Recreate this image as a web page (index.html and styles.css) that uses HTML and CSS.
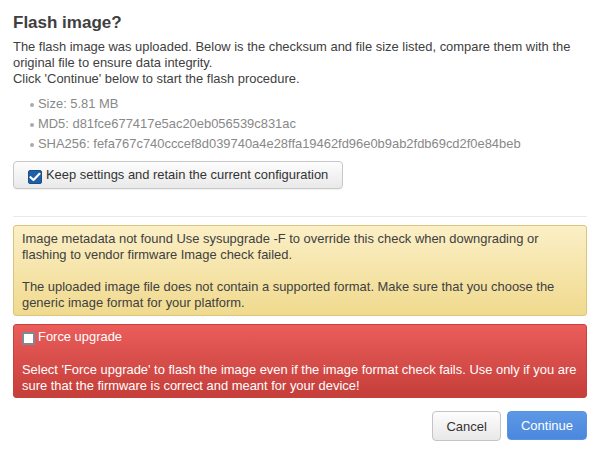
FILE: index.html
```html
<!DOCTYPE html>
<html>
<head>
<meta charset="utf-8">
<link rel="stylesheet" href="styles.css">
</head>
<body>
<div class="dialog">
  <h4 class="title">Flash image?</h4>
  <p class="intro">The flash image was uploaded. Below is the checksum and file size listed, compare them with the original file to ensure data integrity.<br>Click 'Continue' below to start the flash procedure.</p>
  <ul class="facts">
    <li>Size: 5.81 MB</li>
    <li>MD5: d81fce677417e5ac20eb056539c831ac</li>
    <li>SHA256: fefa767c740cccef8d039740a4e28ffa19462fd96e0b9ab2fdb69cd2f0e84beb</li>
  </ul>
  <label class="keep">
    <span class="cb cb-on"><svg width="12" height="10" viewBox="0 0 12 10"><path d="M1.5 5.2 L4.5 8 L10.5 1.8" fill="none" stroke="#fff" stroke-width="2.2" stroke-linecap="round" stroke-linejoin="round"/></svg></span>
    <span>Keep settings and retain the current configuration</span>
  </label>
  <hr class="sep">
  <div class="alert warn">
    <p>Image metadata not found Use sysupgrade -F to override this check when downgrading or flashing to vendor firmware Image check failed.</p>
    <p>The uploaded image file does not contain a supported format. Make sure that you choose the generic image format for your platform.</p>
  </div>
  <div class="alert danger">
    <label class="force"><span class="cb cb-off"></span><span>Force upgrade</span></label>
    <p>Select 'Force upgrade' to flash the image even if the image format check fails. Use only if you are sure that the firmware is correct and meant for your device!</p>
  </div>
  <div class="actions">
    <button class="btn">Cancel</button>
    <button class="btn primary">Continue</button>
  </div>
</div>
</body>
</html>
```
FILE: styles.css
```css
html, body {
  margin: 0;
  padding: 0;
  background: #fff;
}
body {
  font-family: "Liberation Sans", Arial, sans-serif;
  font-size: 12.93px;
  line-height: 16px;
  color: #404040;
}
.dialog {
  padding: 12px 13px 13px 13px;
}
.title {
  margin: 0;
  font-size: 17px;
  line-height: 22px;
  font-weight: bold;
  color: #404040;
  padding-top: 0;
}
.intro {
  margin: 5px 0 0 0;
}
.facts {
  margin: 7px 0 0 0;
  padding: 0 0 0 25px;
  color: #888;
  list-style: none;
}
.facts li {
  line-height: 20px;
  position: relative;
}
.facts li::before {
  content: "";
  position: absolute;
  left: -8px;
  top: 9px;
  width: 4px;
  height: 4px;
  border-radius: 50%;
  background: #aaa;
}
.keep {
  display: inline-flex;
  align-items: center;
  gap: 4px;
  margin-top: 7px;
  height: 26px;
  padding: 0 14px 0 14px;
  border: 1px solid #c8c8c8;
  border-radius: 4px;
  background: linear-gradient(#fdfdfd, #e9e9e9);
  box-shadow: 0 1px 1px rgba(0,0,0,0.06);
  color: #333;
}
.cb {
  display: inline-flex;
  align-items: center;
  justify-content: center;
  width: 14px;
  height: 14px;
  border-radius: 2px;
  box-sizing: border-box;
}
.cb-on {
  background: #1f5fa6;
  border: 1px solid #1a4f8a;
  margin-top: 3px;
}
.cb-off {
  background: #fff;
  border: 2px solid #7f8898;
  border-radius: 1px;
  width: 13px;
  height: 13px;
  margin-top: 2px;
}
.sep {
  border: 0;
  border-top: 1px solid #e8e8e8;
  margin: 27px 0 8px 0;
}
.alert {
  border-radius: 3px;
  padding: 5px 6px 4px 8px;
}
.alert p {
  margin: 0;
}
.alert p + p {
  margin-top: 16px;
}
.warn {
  background: linear-gradient(#fbefc6, #f0da8e);
  border: 1px solid #dcc47c;
  color: #404040;
}
.danger {
  margin-top: 8px;
  background: linear-gradient(#ea5d5b, #c53e3a);
  border: 1px solid #c9413d;
  color: #fff;
  padding-top: 3px;
  padding-bottom: 3px;
}
.force {
  display: flex;
  align-items: center;
  gap: 3px;
  height: 18px;
}
.danger p {
  margin-top: 16px;
}
.actions {
  display: flex;
  justify-content: flex-end;
  gap: 6px;
  margin-top: 13px;
}
.btn {
  font-family: inherit;
  font-size: 13px;
  height: 30px;
  padding: 0 13px;
  border-radius: 4px;
  border: 1px solid #c4c4c4;
  background: linear-gradient(#fdfdfd, #e8e8e8);
  color: #333;
}
.btn.primary {
  border: 1px solid #5a93e0;
  background: linear-gradient(#5d98e6, #4b87de);
  color: #fff;
  padding: 0 13px;
  height: 29px;
}
```
